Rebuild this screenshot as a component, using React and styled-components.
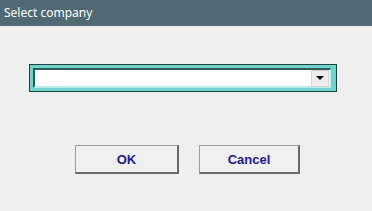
import React from "react";
import styled, { createGlobalStyle } from "styled-components";

const Global = createGlobalStyle`
  html, body { margin: 0; padding: 0; background: #efefef; }
  body { width: 372px; height: 211px; overflow: hidden; }
`;

const Window = styled.div`
  width: 372px;
  height: 211px;
  display: flex;
  flex-direction: column;
  background: #efefef;
`;

const TitleBar = styled.div`
  height: 26px;
  background: #506972;
  color: #ffffff;
  font-family: "Noto Sans", "Open Sans", sans-serif;
  font-size: 12px;
  line-height: 26px;
  padding-left: 4px;
  box-sizing: border-box;
`;

const Body = styled.div`
  display: flex;
  flex-direction: column;
  padding: 38px 0 0 29px;
`;

const Combo = styled.div`
  width: 308px;
  height: 28px;
  box-sizing: border-box;
  border: 1px solid #21433f;
  background: #6fd4cd;
  padding: 3px 5px 3px 3px;
  display: flex;
`;

const Field = styled.div`
  flex: 1;
  display: flex;
  align-items: center;
  justify-content: flex-end;
  background: #ffffff;
  border-top: 2px solid #2f5753;
  border-left: 2px solid #2f5753;
  border-bottom: 2px solid #b8ece8;
  border-right: 1px solid #b8ece8;
  padding-right: 1px;
`;

const DropButton = styled.div`
  width: 18px;
  height: 17px;
  box-sizing: border-box;
  background: #ececec;
  border: 1px solid #d4d4d4;
  display: flex;
  align-items: center;
  justify-content: center;
`;

const Arrow = styled.div`
  width: 0;
  height: 0;
  border-left: 4px solid transparent;
  border-right: 4px solid transparent;
  border-top: 4px solid #000;
`;

const Buttons = styled.div`
  display: flex;
  gap: 20px;
  margin-top: 53px;
  margin-left: 46px;
`;

const Button = styled.button`
  width: ${(p) => p.$w}px;
  height: 29px;
  box-sizing: border-box;
  background: #f0f0f0;
  border-top: 1px solid #9a9a9a;
  border-left: 1px solid #9a9a9a;
  border-right: 2px solid #6a6a6a;
  border-bottom: 2px solid #6a6a6a;
  color: #1a1a8c;
  font-family: "Liberation Sans", Arial, sans-serif;
  font-weight: bold;
  font-size: 13px;
  padding: 0;
  cursor: pointer;
`;

export default function App() {
  return (
    <>
      <Global />
      <Window>
        <TitleBar>Select company</TitleBar>
        <Body>
          <Combo>
            <Field>
              <DropButton>
                <Arrow />
              </DropButton>
            </Field>
          </Combo>
          <Buttons>
            <Button $w={104}>OK</Button>
            <Button $w={101}>Cancel</Button>
          </Buttons>
        </Body>
      </Window>
    </>
  );
}
